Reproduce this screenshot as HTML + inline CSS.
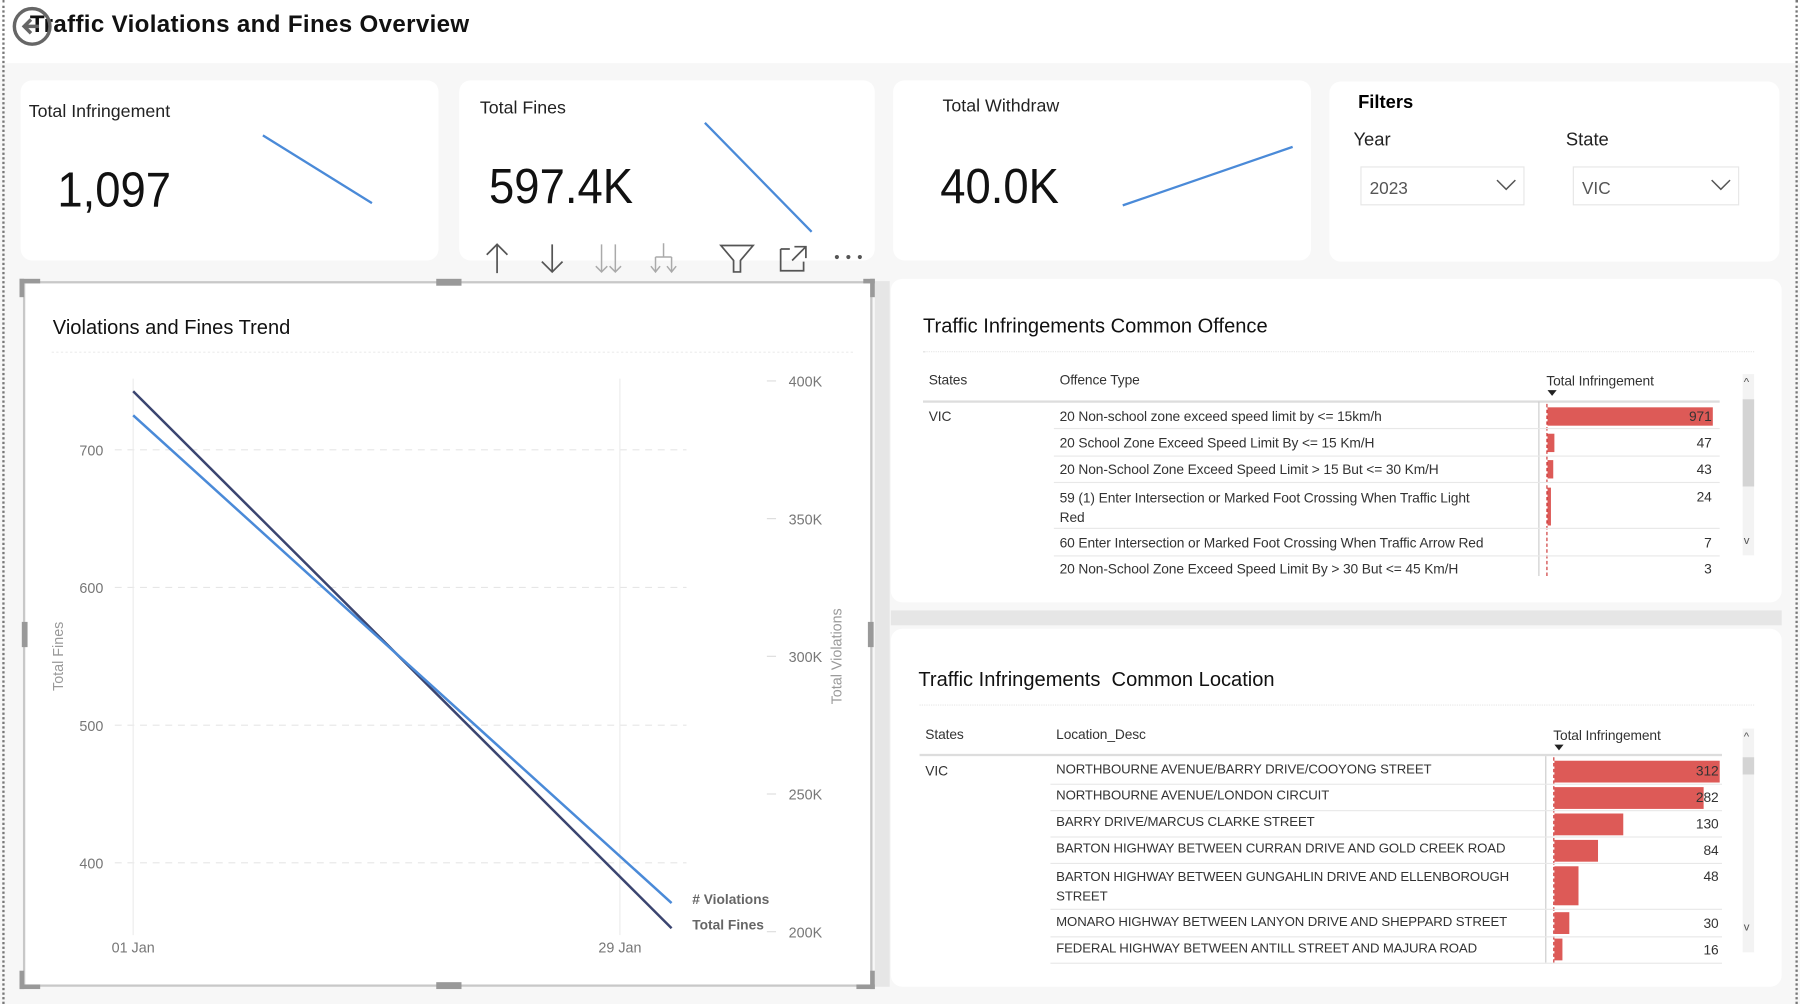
<!DOCTYPE html>
<html><head><meta charset="utf-8"><style>
*{margin:0;padding:0;box-sizing:border-box}
html,body{width:1800px;height:1004px;overflow:hidden;background:#fff}
#w{position:absolute;left:0;top:0;width:1568px;height:875px;transform:scale(1.148,1.1474);transform-origin:0 0;font-family:"Liberation Sans",sans-serif;color:#222}
.a{position:absolute}
.card{position:absolute;background:#fff;border-radius:10px}
.t{position:absolute;white-space:nowrap}
.row{position:absolute;font-size:12px;color:#333;white-space:nowrap;letter-spacing:-0.1px}
.hl{position:absolute;height:1px;background:#e8e8e8}
.bar{position:absolute;background:#dd5a57}
</style></head><body><div id="w">
<div class="a" style="left:0;top:55px;width:1568px;height:820px;background:#f7f7f7"></div>
<div class="a" style="left:2px;top:0;width:0;height:875px;border-left:2px dotted #777"></div>
<div class="a" style="left:1564px;top:0;width:0;height:875px;border-left:2px dotted #777"></div>
<div class="t" style="left:26px;top:10px;font-size:21px;font-weight:bold;color:#111;letter-spacing:0.3px">Traffic Violations and Fines Overview</div>
<div class="a" style="left:11px;top:6px;width:34px;height:34px;border:3px solid #666;border-radius:50%"></div>
<svg class="a" style="left:13px;top:8px" width="30" height="30"><path d="M21 15H8M14 9l-6 6 6 6" stroke="#666" stroke-width="3" fill="none"/></svg>

<div class="card" style="left:18px;top:70px;width:364px;height:157px"></div>
<div class="t" style="left:25px;top:89px;font-size:15.5px">Total Infringement</div>
<div class="t" style="left:50px;top:142px;font-size:43px;color:#111;transform:scaleX(0.92);transform-origin:0 0">1,097</div>
<svg class="a" style="left:0;top:0" width="400" height="240"><line x1="229" y1="118" x2="324" y2="177" stroke="#4a8ad8" stroke-width="2"/></svg>

<div class="card" style="left:400px;top:70px;width:362px;height:157px"></div>
<div class="t" style="left:418px;top:86px;font-size:15.5px">Total Fines</div>
<div class="t" style="left:426px;top:139px;font-size:43px;color:#111;transform:scaleX(0.92);transform-origin:0 0">597.4K</div>
<svg class="a" style="left:0;top:0" width="800" height="250"><line x1="614" y1="107" x2="707" y2="202" stroke="#4a8ad8" stroke-width="2"/>
<g stroke="#555" stroke-width="1.5" fill="none"><path d="M433 238V213M424 222l9-9 9 9"/><path d="M481 213v24M472 228l9 9 9-9"/></g>
<g stroke="#aaa" stroke-width="1.3" fill="none"><path d="M524 213v24M519 232l5 5 5-5M536 213v24M531 232l5 5 5-5"/><path d="M578 212v12M571 224h14M571 224v13M585 224v13M567 232l4 5 4-5M581 232l4 5 4-5"/></g>
<g stroke="#555" stroke-width="1.5" fill="none"><path d="M628 214h28l-11 13v10h-6V227z"/><path d="M680 217h8M680 217v19h20v-8M692 215h10v10M702 215l-12 12"/></g>
<g fill="#555"><circle cx="729" cy="224" r="1.8"/><circle cx="739" cy="224" r="1.8"/><circle cx="749" cy="224" r="1.8"/></g></svg>

<div class="card" style="left:778px;top:70px;width:364px;height:157px"></div>
<div class="t" style="left:821px;top:84px;font-size:15.5px">Total Withdraw</div>
<div class="t" style="left:819px;top:139px;font-size:43px;color:#111;transform:scaleX(0.92);transform-origin:0 0">40.0K</div>
<svg class="a" style="left:0;top:0" width="1200" height="240"><line x1="978" y1="179" x2="1126" y2="128" stroke="#4a8ad8" stroke-width="2"/></svg>

<div class="card" style="left:1158px;top:71px;width:392px;height:157px"></div>
<div class="t" style="left:1183px;top:81px;font-size:16px;font-weight:bold;color:#000">Filters</div>
<div class="t" style="left:1179px;top:114px;font-size:16px">Year</div>
<div class="t" style="left:1364px;top:114px;font-size:16px">State</div>
<div class="a" style="left:1185px;top:145px;width:143px;height:34px;border:1px solid #e6e6e6"></div>
<div class="t" style="left:1193px;top:156px;font-size:15px;color:#555">2023</div>
<div class="a" style="left:1370px;top:145px;width:145px;height:34px;border:1px solid #e6e6e6"></div>
<div class="t" style="left:1378px;top:156px;font-size:15px;color:#555">VIC</div>
<svg class="a" style="left:0;top:0" width="1568" height="200"><path d="M1304 157l8 8 8-8M1491 157l8 8 8-8" stroke="#555" stroke-width="1.3" fill="none"/></svg>

<!-- chart -->
<div class="a" style="left:20px;top:245px;width:740px;height:615px;background:#fff;border:2px solid #c8c8c8"></div>
<div class="a" style="left:762px;top:245px;width:13px;height:615px;background:#e6e6e6"></div>
<svg class="a" style="left:0;top:0" width="780" height="875">
<g fill="#999"><rect x="17" y="243" width="4" height="16"/><rect x="17" y="243" width="18" height="4"/><rect x="752" y="243" width="10" height="4"/><rect x="758" y="243" width="4" height="16"/><rect x="17" y="846" width="4" height="16"/><rect x="17" y="858" width="18" height="4"/><rect x="758" y="846" width="4" height="16"/><rect x="746" y="858" width="16" height="4"/><rect x="380" y="243" width="22" height="6"/><rect x="380" y="856" width="22" height="6"/><rect x="19" y="542" width="5" height="22"/><rect x="756" y="542" width="5" height="22"/></g>
<line x1="45" y1="307" x2="745" y2="307" stroke="#eee" stroke-dasharray="2 2"/>
<g stroke="#e6e6e6" stroke-dasharray="6 5"><line x1="100" y1="392" x2="598" y2="392"/><line x1="100" y1="512" x2="598" y2="512"/><line x1="100" y1="632" x2="598" y2="632"/><line x1="100" y1="752" x2="598" y2="752"/></g>
<g stroke="#ececec"><line x1="116" y1="330" x2="116" y2="815"/><line x1="540" y1="330" x2="540" y2="815"/></g>
<g stroke="#ddd"><line x1="668" y1="332" x2="676" y2="332"/><line x1="668" y1="452" x2="676" y2="452"/><line x1="668" y1="572" x2="676" y2="572"/><line x1="668" y1="692" x2="676" y2="692"/><line x1="668" y1="812" x2="676" y2="812"/></g>
<line x1="116" y1="341" x2="585" y2="809" stroke="#3b4570" stroke-width="2.2"/>
<line x1="116" y1="362" x2="585" y2="787" stroke="#4a8ad8" stroke-width="2.2"/>
<g font-family="Liberation Sans" font-size="12.5" fill="#777"><text x="90" y="397" text-anchor="end">700</text><text x="90" y="517" text-anchor="end">600</text><text x="90" y="637" text-anchor="end">500</text><text x="90" y="757" text-anchor="end">400</text>
<text x="687" y="337">400K</text><text x="687" y="457">350K</text><text x="687" y="577">300K</text><text x="687" y="697">250K</text><text x="687" y="817">200K</text>
<text x="116" y="830" text-anchor="middle">01 Jan</text><text x="540" y="830" text-anchor="middle">29 Jan</text>
<text transform="translate(55 572) rotate(-90)" text-anchor="middle" fill="#999">Total Fines</text>
<text transform="translate(733 572) rotate(-90)" text-anchor="middle" fill="#999">Total Violations</text>
<text x="603" y="788" font-weight="bold" fill="#666" font-size="12">#&#160;Violations</text><text x="603" y="810" font-weight="bold" fill="#666" font-size="12">Total Fines</text></g>
</svg>
<div class="t" style="left:46px;top:275px;font-size:17.5px;color:#111">Violations and Fines Trend</div>

<!-- offence table -->
<div class="card" style="left:776px;top:243px;width:776px;height:282px"></div>
<div class="a" style="left:776px;top:532px;width:776px;height:13px;background:#e6e6e6"></div>
<div class="t" style="left:804px;top:274px;font-size:17.5px;color:#111">Traffic Infringements Common Offence</div>
<div class="a" style="left:804px;top:306px;width:724px;border-top:1px dotted #e6e6e6"></div>
<div class="row" style="left:809px;top:324px">States</div>
<div class="row" style="left:923px;top:324px">Offence Type</div>
<div class="row" style="left:1347px;top:325px">Total Infringement</div>
<div class="a" style="left:1348px;top:340px;border:4px solid transparent;border-top:5px solid #222"></div>
<div class="hl" style="left:804px;top:349px;width:694px;height:2px;background:#ddd"></div>
<div class="a" style="left:1340px;top:350px;width:1px;height:152px;background:#ccc"></div>
<div class="a" style="left:1347px;top:352px;height:150px;border-left:1px dashed #c33"></div>
<div class="row" style="left:809px;top:356px">VIC</div>
<div class="row" style="left:923px;top:356px">20 Non-school zone exceed speed limit by &lt;= 15km/h</div>
<div class="bar" style="left:1348px;top:355px;width:144px;height:16px"></div><div class="row" style="left:1350px;top:356px;width:141px;text-align:right">971</div>
<div class="hl" style="left:918px;top:373px;width:580px"></div>
<div class="row" style="left:923px;top:379px">20 School Zone Exceed Speed Limit By &lt;= 15 Km/H</div>
<div class="bar" style="left:1348px;top:378px;width:6px;height:16px"></div><div class="row" style="left:1350px;top:379px;width:141px;text-align:right">47</div>
<div class="hl" style="left:918px;top:397px;width:580px"></div>
<div class="row" style="left:923px;top:402px">20 Non-School Zone Exceed Speed Limit &gt; 15 But &lt;= 30 Km/H</div>
<div class="bar" style="left:1348px;top:401px;width:5px;height:16px"></div><div class="row" style="left:1350px;top:402px;width:141px;text-align:right">43</div>
<div class="hl" style="left:918px;top:420px;width:580px"></div>
<div class="row" style="left:923px;top:426px;line-height:17px">59 (1) Enter Intersection or Marked Foot Crossing When Traffic Light<br>Red</div>
<div class="bar" style="left:1348px;top:425px;width:3px;height:33px"></div><div class="row" style="left:1350px;top:426px;width:141px;text-align:right">24</div>
<div class="hl" style="left:918px;top:460px;width:580px"></div>
<div class="row" style="left:923px;top:466px">60 Enter Intersection or Marked Foot Crossing When Traffic Arrow Red</div>
<div class="row" style="left:1350px;top:466px;width:141px;text-align:right">7</div>
<div class="hl" style="left:918px;top:484px;width:580px"></div>
<div class="row" style="left:923px;top:489px">20 Non-School Zone Exceed Speed Limit By &gt; 30 But &lt;= 45 Km/H</div>
<div class="row" style="left:1350px;top:489px;width:141px;text-align:right">3</div>
<div class="a" style="left:1518px;top:326px;width:10px;height:158px;background:#f3f3f3"></div>
<div class="a" style="left:1518px;top:348px;width:10px;height:76px;background:#d4d4d4"></div>
<div class="t" style="left:1519px;top:328px;font-size:10px;color:#555">^</div>
<div class="t" style="left:1519px;top:466px;font-size:10px;color:#555">v</div>

<!-- location table -->
<div class="card" style="left:776px;top:548px;width:776px;height:312px"></div>
<div class="t" style="left:800px;top:582px;font-size:17.5px;color:#111">Traffic Infringements&#160; Common Location</div>
<div class="a" style="left:801px;top:614px;width:727px;border-top:1px dotted #e6e6e6"></div>
<div class="row" style="left:806px;top:633px">States</div>
<div class="row" style="left:920px;top:633px">Location_Desc</div>
<div class="row" style="left:1353px;top:634px">Total Infringement</div>
<div class="a" style="left:1354px;top:649px;border:4px solid transparent;border-top:5px solid #222"></div>
<div class="hl" style="left:801px;top:657px;width:699px;height:2px;background:#ddd"></div>
<div class="a" style="left:1346px;top:659px;width:1px;height:180px;background:#ccc"></div>
<div class="a" style="left:1353px;top:660px;height:179px;border-left:1px dashed #c33"></div>
<div class="row" style="left:806px;top:665px">VIC</div>
<div class="row" style="left:920px;top:665px;font-size:11.5px">NORTHBOURNE AVENUE/BARRY DRIVE/COOYONG STREET</div>
<div class="bar" style="left:1354px;top:663px;width:144px;height:19px"></div><div class="row" style="left:1356px;top:665px;width:141px;text-align:right">312</div>
<div class="hl" style="left:915px;top:683px;width:585px"></div>
<div class="row" style="left:920px;top:688px;font-size:11.5px">NORTHBOURNE AVENUE/LONDON CIRCUIT</div>
<div class="bar" style="left:1354px;top:686px;width:130px;height:19px"></div><div class="row" style="left:1356px;top:688px;width:141px;text-align:right">282</div>
<div class="hl" style="left:915px;top:706px;width:585px"></div>
<div class="row" style="left:920px;top:711px;font-size:11.5px">BARRY DRIVE/MARCUS CLARKE STREET</div>
<div class="bar" style="left:1354px;top:709px;width:60px;height:19px"></div><div class="row" style="left:1356px;top:711px;width:141px;text-align:right">130</div>
<div class="hl" style="left:915px;top:729px;width:585px"></div>
<div class="row" style="left:920px;top:734px;font-size:11.5px">BARTON HIGHWAY BETWEEN CURRAN DRIVE AND GOLD CREEK ROAD</div>
<div class="bar" style="left:1354px;top:732px;width:38px;height:19px"></div><div class="row" style="left:1356px;top:734px;width:141px;text-align:right">84</div>
<div class="hl" style="left:915px;top:752px;width:585px"></div>
<div class="row" style="left:920px;top:757px;line-height:17px;font-size:11.5px">BARTON HIGHWAY BETWEEN GUNGAHLIN DRIVE AND ELLENBOROUGH<br>STREET</div>
<div class="bar" style="left:1354px;top:755px;width:21px;height:34px"></div><div class="row" style="left:1356px;top:757px;width:141px;text-align:right">48</div>
<div class="hl" style="left:915px;top:792px;width:585px"></div>
<div class="row" style="left:920px;top:798px;font-size:11.5px">MONARO HIGHWAY BETWEEN LANYON DRIVE AND SHEPPARD STREET</div>
<div class="bar" style="left:1354px;top:795px;width:13px;height:19px"></div><div class="row" style="left:1356px;top:798px;width:141px;text-align:right">30</div>
<div class="hl" style="left:915px;top:816px;width:585px"></div>
<div class="row" style="left:920px;top:821px;font-size:11.5px">FEDERAL HIGHWAY BETWEEN ANTILL STREET AND MAJURA ROAD</div>
<div class="bar" style="left:1354px;top:818px;width:7px;height:19px"></div><div class="row" style="left:1356px;top:821px;width:141px;text-align:right">16</div>
<div class="hl" style="left:915px;top:839px;width:585px"></div>
<div class="a" style="left:1518px;top:635px;width:10px;height:195px;background:#f3f3f3"></div>
<div class="a" style="left:1518px;top:660px;width:10px;height:15px;background:#d4d4d4"></div>
<div class="t" style="left:1519px;top:637px;font-size:10px;color:#555">^</div>
<div class="t" style="left:1519px;top:803px;font-size:10px;color:#555">v</div>
</div></body></html>
